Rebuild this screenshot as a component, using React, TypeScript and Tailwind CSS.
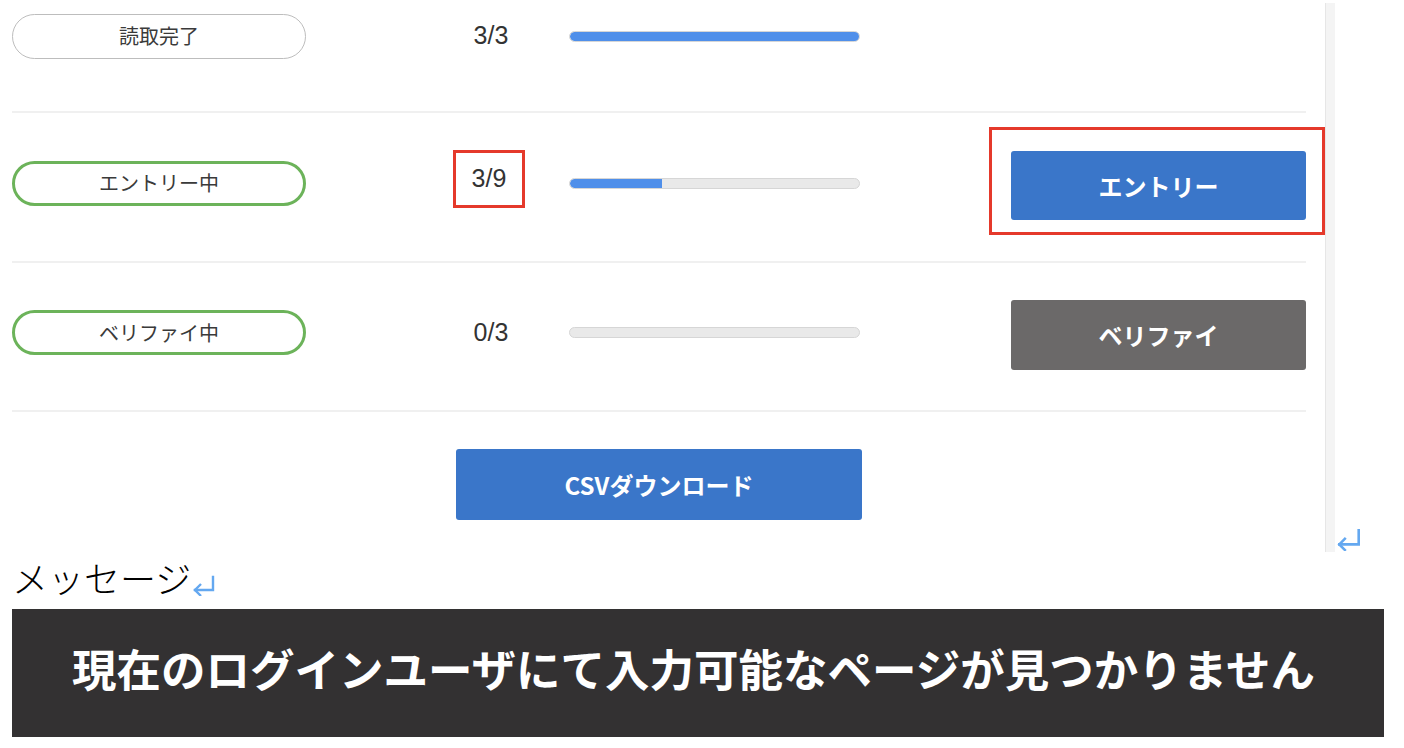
import React from 'react'

const JP = { fontFamily: '"Noto Sans CJK JP", "Noto Sans", sans-serif' }
const NUM = { fontFamily: '"Liberation Sans", Arial, "Noto Sans CJK JP", sans-serif' }

function ReturnMark({ className = '' }: { className?: string }) {
  return (
    <svg viewBox="0 0 26 22" className={className} fill="none" stroke="#64a8f0" strokeWidth="2.4" strokeLinecap="square">
      <path d="M22 3 V16 H4" />
      <path d="M10 10 L4 16 L10 22" strokeLinecap="butt" />
    </svg>
  )
}

function Pill({ label, active }: { label: string; active?: boolean }) {
  return (
    <div
      className={`ml-3 w-[294px] h-[45px] shrink-0 rounded-full flex items-center justify-center text-[20px] text-[#3a3a3a] ${
        active ? 'border-[3px] border-[#6cb35a]' : 'border-[1.5px] border-[#bdbdbd]'
      }`}
      style={JP}
    >
      {label}
    </div>
  )
}

function Bar({ pct }: { pct: number }) {
  return (
    <div className="w-[291px] h-[11px] shrink-0 rounded-full bg-[#e9e9e9] border border-[#d6d6d6] overflow-hidden">
      <div className="h-full bg-[#4f8fea] rounded-l-full" style={{ width: `${pct}%` }} />
    </div>
  )
}

export default function App() {
  return (
    <div className="w-[1404px] h-[748px] bg-white overflow-hidden">
      {/* embedded screenshot */}
      <div className="flex h-[552px]">
        <div className="w-[1325px] shrink-0">
          {/* row 1 */}
          <div className="flex items-center h-[72px]">
            <Pill label="読取完了" />
            <div className="ml-[149px] w-[72px] text-center text-[25px] text-[#333]" style={NUM}>3/3</div>
            <div className="ml-[42px]"><Bar pct={100} /></div>
          </div>
          <div className="mt-[39px] ml-3 w-[1294px] h-[2px] bg-[#f0f0f0]" />

          {/* row 2 */}
          <div className="flex items-center h-[148px] pb-[8px]">
            <Pill label="エントリー中" active />
            <div
              className="ml-[147px] -mt-[8px] w-[72px] h-[58px] border-[3px] border-[#e5392b] flex items-center justify-center text-[25px] text-[#333]"
              style={NUM}
            >
              3/9
            </div>
            <div className="ml-[44px]"><Bar pct={32} /></div>
            <div className="ml-[129px] -mt-[4px] w-[336px] h-[108px] border-[3px] border-[#e5392b] pl-[19px] pt-[21px]">
              <button
                className="w-[295px] h-[69px] rounded-[3px] bg-[#3a76c9] text-white text-[24px] font-bold"
                style={JP}
              >
                エントリー
              </button>
            </div>
          </div>
          <div className="ml-3 w-[1294px] h-[2px] bg-[#f0f0f0]" />

          {/* row 3 */}
          <div className="flex items-center h-[147px] pb-[8px]">
            <Pill label="ベリファイ中" active />
            <div className="ml-[149px] w-[72px] text-center text-[25px] text-[#333]" style={NUM}>0/3</div>
            <div className="ml-[42px]"><Bar pct={0} /></div>
            <button
              className="ml-[151px] mt-[4px] w-[295px] h-[70px] rounded-[3px] bg-[#6b6969] text-white text-[24px] font-bold"
              style={JP}
            >
              ベリファイ
            </button>
          </div>
          <div className="ml-3 w-[1294px] h-[2px] bg-[#f0f0f0]" />

          {/* csv */}
          <div className="pt-[37px] pl-[456px]">
            <button
              className="w-[406px] h-[71px] rounded-[3px] bg-[#3a76c9] text-white text-[24px] font-bold"
              style={JP}
            >
              CSVダウンロード
            </button>
          </div>
        </div>
        <div className="w-[10px] mt-[3px] bg-[#f4f4f4] border-l border-[#e6e6e6]" />
        <div className="flex items-end pb-[1px]">
          <ReturnMark className="w-[28px] h-[24px]" />
        </div>
      </div>

      {/* document text */}
      <div className="h-[57px] pl-3 flex items-center">
        <span className="text-[36px] leading-none text-black" style={{ fontFamily: '"Liberation Serif", "Noto Sans CJK JP", serif', fontWeight: 300 }}>
          メッセージ
        </span>
        <ReturnMark className="w-[26px] h-[22px] mt-[8px]" />
      </div>

      <div className="ml-3 w-[1372px] h-[128px] bg-[#333132] flex items-center pl-[60px] pb-[10px]">
        <span className="text-white text-[44.5px] font-bold" style={JP}>
          現在のログインユーザにて入力可能なページが見つかりません
        </span>
      </div>
    </div>
  )
}
